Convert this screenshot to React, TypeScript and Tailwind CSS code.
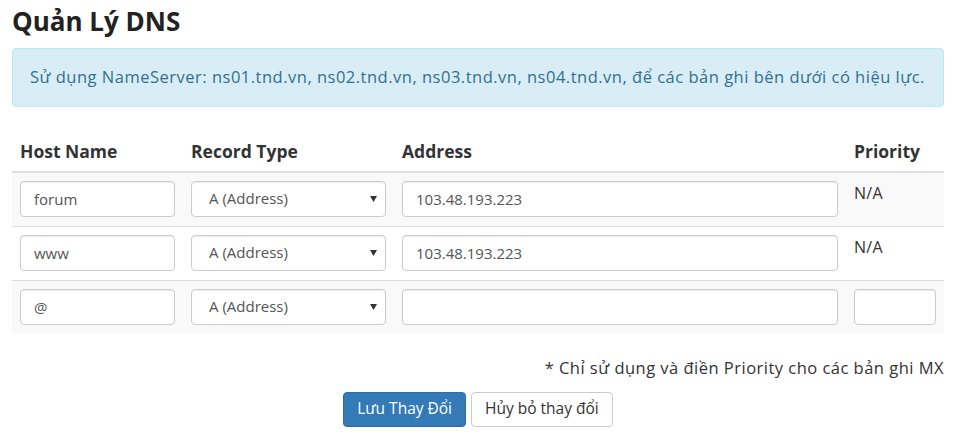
import React from "react";

const inputCls =
  "block w-full h-[36px] rounded-[4px] border border-[#ccc] bg-white px-[13px] text-[15px] text-[#555] shadow-[inset_0_1px_1px_rgba(0,0,0,0.075)] outline-none font-['Open_Sans']";

function Select() {
  return (
    <div className="relative">
      <select
        className={inputCls + " appearance-none pl-[17px]"}
        defaultValue="A"
      >
        <option value="A">A (Address)</option>
        <option value="AAAA">AAAA (IPv6 Address)</option>
        <option value="MX">MX (Mail)</option>
        <option value="CNAME">CNAME (Alias)</option>
        <option value="TXT">TXT (SPF)</option>
      </select>
      <svg
        className="absolute right-[9px] top-[15px] pointer-events-none"
        width="7"
        height="6"
        viewBox="0 0 7 6"
      >
        <path d="M0 0 H7 L3.5 6 Z" fill="#333" />
      </svg>
    </div>
  );
}

type Row = { host: string; addr: string; priority: boolean };

const rows: Row[] = [
  { host: "forum", addr: "103.48.193.223", priority: false },
  { host: "www", addr: "103.48.193.223", priority: false },
  { host: "@", addr: "", priority: true },
];

export default function App() {
  return (
    <div className="w-[973px] h-[439px] bg-white px-3 font-['Open_Sans'] text-[#333] overflow-hidden">
      <div className="w-[932px]">
        <h1 className="pt-[7px] text-[26px] font-bold leading-[1.1] text-[#222]">
          Quản Lý DNS
        </h1>
        <div className="mt-[12px] flex h-[59px] items-center whitespace-nowrap rounded-[4px] border border-[#bce8f1] bg-[#d9edf7] pl-[17px] pr-[8px] text-[16.5px] tracking-[0.5px] text-[#31708f]">
          Sử dụng NameServer: ns01.tnd.vn, ns02.tnd.vn, ns03.tnd.vn, ns04.tnd.vn, để các bản ghi bên dưới có hiệu lực.
        </div>
        <table className="mt-[24px] w-full table-fixed border-collapse">
          <colgroup>
            <col className="w-[171px]" />
            <col className="w-[211px]" />
            <col className="w-[452px]" />
            <col className="w-[98px]" />
          </colgroup>
          <thead>
            <tr className="border-b-2 border-[#ddd]">
              <th className="px-2 pt-2 pb-2 text-left text-[17.5px] font-bold leading-[24px] text-[#333]">
                Host Name
              </th>
              <th className="px-2 pt-2 pb-2 text-left text-[17.5px] font-bold leading-[24px] text-[#333]">
                Record Type
              </th>
              <th className="px-2 pt-2 pb-2 text-left text-[17.5px] font-bold leading-[24px] text-[#333]">
                Address
              </th>
              <th className="px-2 pt-2 pb-2 text-left text-[17.5px] font-bold leading-[24px] text-[#333]">
                Priority
              </th>
            </tr>
          </thead>
          <tbody>
            {rows.map((r, i) => (
              <tr
                key={i}
                className={
                  (i % 2 === 0 ? "bg-[#f9f9f9] " : "bg-white ") +
                  (i === 0 ? "" : "border-t border-[#ddd]")
                }
              >
                <td className="px-2 pt-2 pb-[9px] align-top">
                  <input className={inputCls} defaultValue={r.host} />
                </td>
                <td className="px-2 pt-2 pb-[9px] align-top">
                  <Select />
                </td>
                <td className="px-2 pt-2 pb-[9px] align-top">
                  <input className={inputCls} defaultValue={r.addr} />
                </td>
                <td className="px-2 pt-2 pb-[9px] align-top text-[16px] tracking-[0.3px] leading-[24px] text-[#333]">
                  {r.priority ? <input className={inputCls} defaultValue="" /> : "N/A"}
                </td>
              </tr>
            ))}
          </tbody>
        </table>
        <p className="mt-[22px] text-right text-[16.5px] tracking-[0.48px] leading-[24px] text-[#333]">
          * Chỉ sử dụng và điền Priority cho các bản ghi MX
        </p>
        <div className="mt-[12px] flex justify-center gap-[5px]">
          <button className="h-[35px] rounded-[4px] border border-[#2e6da4] bg-[#337ab7] px-[13px] text-[15.5px] text-white">
            Lưu Thay Đổi
          </button>
          <button className="h-[35px] rounded-[4px] border border-[#ccc] bg-white px-[13px] text-[15.5px] text-[#333]">
            Hủy bỏ thay đổi
          </button>
        </div>
      </div>
    </div>
  );
}
